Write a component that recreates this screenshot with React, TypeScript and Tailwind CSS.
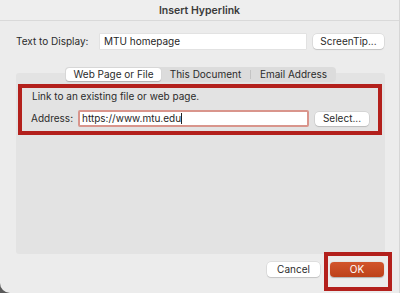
import React from "react";

const font = { fontFamily: "Inter, 'Noto Sans', sans-serif" };

function MacButton({ children, className = "" }: { children: React.ReactNode; className?: string }) {
  return (
    <div
      className={`flex items-center justify-center rounded-[4px] bg-white text-[10px] text-[#2b2b2b] shadow-[0_0_0_0.5px_rgba(0,0,0,0.12),0_1px_1px_rgba(0,0,0,0.12)] ${className}`}
    >
      {children}
    </div>
  );
}

export default function App() {
  return (
    <div className="w-[400px] h-[293px] bg-[#5a5a5a] overflow-hidden" style={font}>
      <div className="flex flex-col w-[400px] h-[293px] bg-[#ececec] rounded-bl-[10px] border-r border-[#d6d6d6]">
        {/* Title */}
        <div className="h-[21px] flex items-center justify-center border-b border-[#d9d9d9] bg-[#eeeeee]">
          <span className="text-[10.5px] font-semibold text-[#3a3a3a] pt-[1px]">Insert Hyperlink</span>
        </div>

        {/* Text to display */}
        <div className="flex items-center mt-[13px] h-[15px] pl-[16px]">
          <span className="w-[84px] text-[10px] text-[#2b2b2b]">Text to Display:</span>
          <div className="w-[206px] h-[15px] bg-white flex items-center pl-[4px] text-[10px] text-[#1f1f1f] shadow-[0_0_0_0.5px_rgba(0,0,0,0.08)]">
            MTU homepage
          </div>
          <MacButton className="ml-[7px] w-[71px] h-[15px]">ScreenTip...</MacButton>
        </div>

        {/* Tab panel */}
        <div className="mt-[24px] ml-[16px] w-[369px] h-[181px] bg-[#e3e3e3] rounded-[3px] flex flex-col">
          <div className="-mt-[6px] self-center flex items-center h-[15px] w-[271px] rounded-[4px] bg-[#dcdcdc] text-[10px] text-[#2b2b2b]">
            <div className="ml-[1px] w-[95px] h-[13px] bg-white rounded-[3px] flex items-center justify-center shadow-[0_0.5px_1px_rgba(0,0,0,0.2)]">
              Web Page or File
            </div>
            <div className="w-[89px] flex items-center justify-center">This Document</div>
            <div className="w-[1px] h-[9px] bg-[#c4c4c4]" />
            <div className="flex-1 flex items-center justify-center">Email Address</div>
          </div>

          {/* Highlighted area */}
          <div className="mt-[2px] ml-[2px] w-[364px] h-[51px] border-[4px] border-[#b3201c] flex flex-col">
            <div className="pl-[10px] mt-[2px] h-[13px] flex items-center text-[10px] text-[#2b2b2b]">
              Link to an existing file or web page.
            </div>
            <div className="flex items-center mt-[7px] pl-[9px]">
              <span className="w-[47px] text-[10px] text-[#2b2b2b]">Address:</span>
              <div className="w-[231px] h-[17px] bg-white rounded-[2px] border-[2px] border-[#d9958c] flex items-center pl-[2px] text-[10px] text-[#1f1f1f]">
                https://www.mtu.edu
                <span className="w-[1px] h-[11px] bg-[#222]" />
              </div>
              <MacButton className="ml-[6px] w-[54px] h-[14px]">Select...</MacButton>
            </div>
          </div>
        </div>

        {/* Bottom buttons */}
        <div className="flex mt-[8px] pl-[267px]">
          <MacButton className="w-[53px] h-[15px]">Cancel</MacButton>
          <div className="relative ml-[10px]">
            <div className="w-[54px] h-[15px] rounded-[4px] bg-gradient-to-b from-[#d2552c] to-[#bd4119] flex items-center justify-center text-[10px] text-white shadow-[0_0.5px_1px_rgba(0,0,0,0.25)]">
              OK
            </div>
            <div className="absolute left-[-6px] top-[-10px] w-[68px] h-[39px] border-[4px] border-[#b3201c]" />
          </div>
        </div>
      </div>
    </div>
  );
}
